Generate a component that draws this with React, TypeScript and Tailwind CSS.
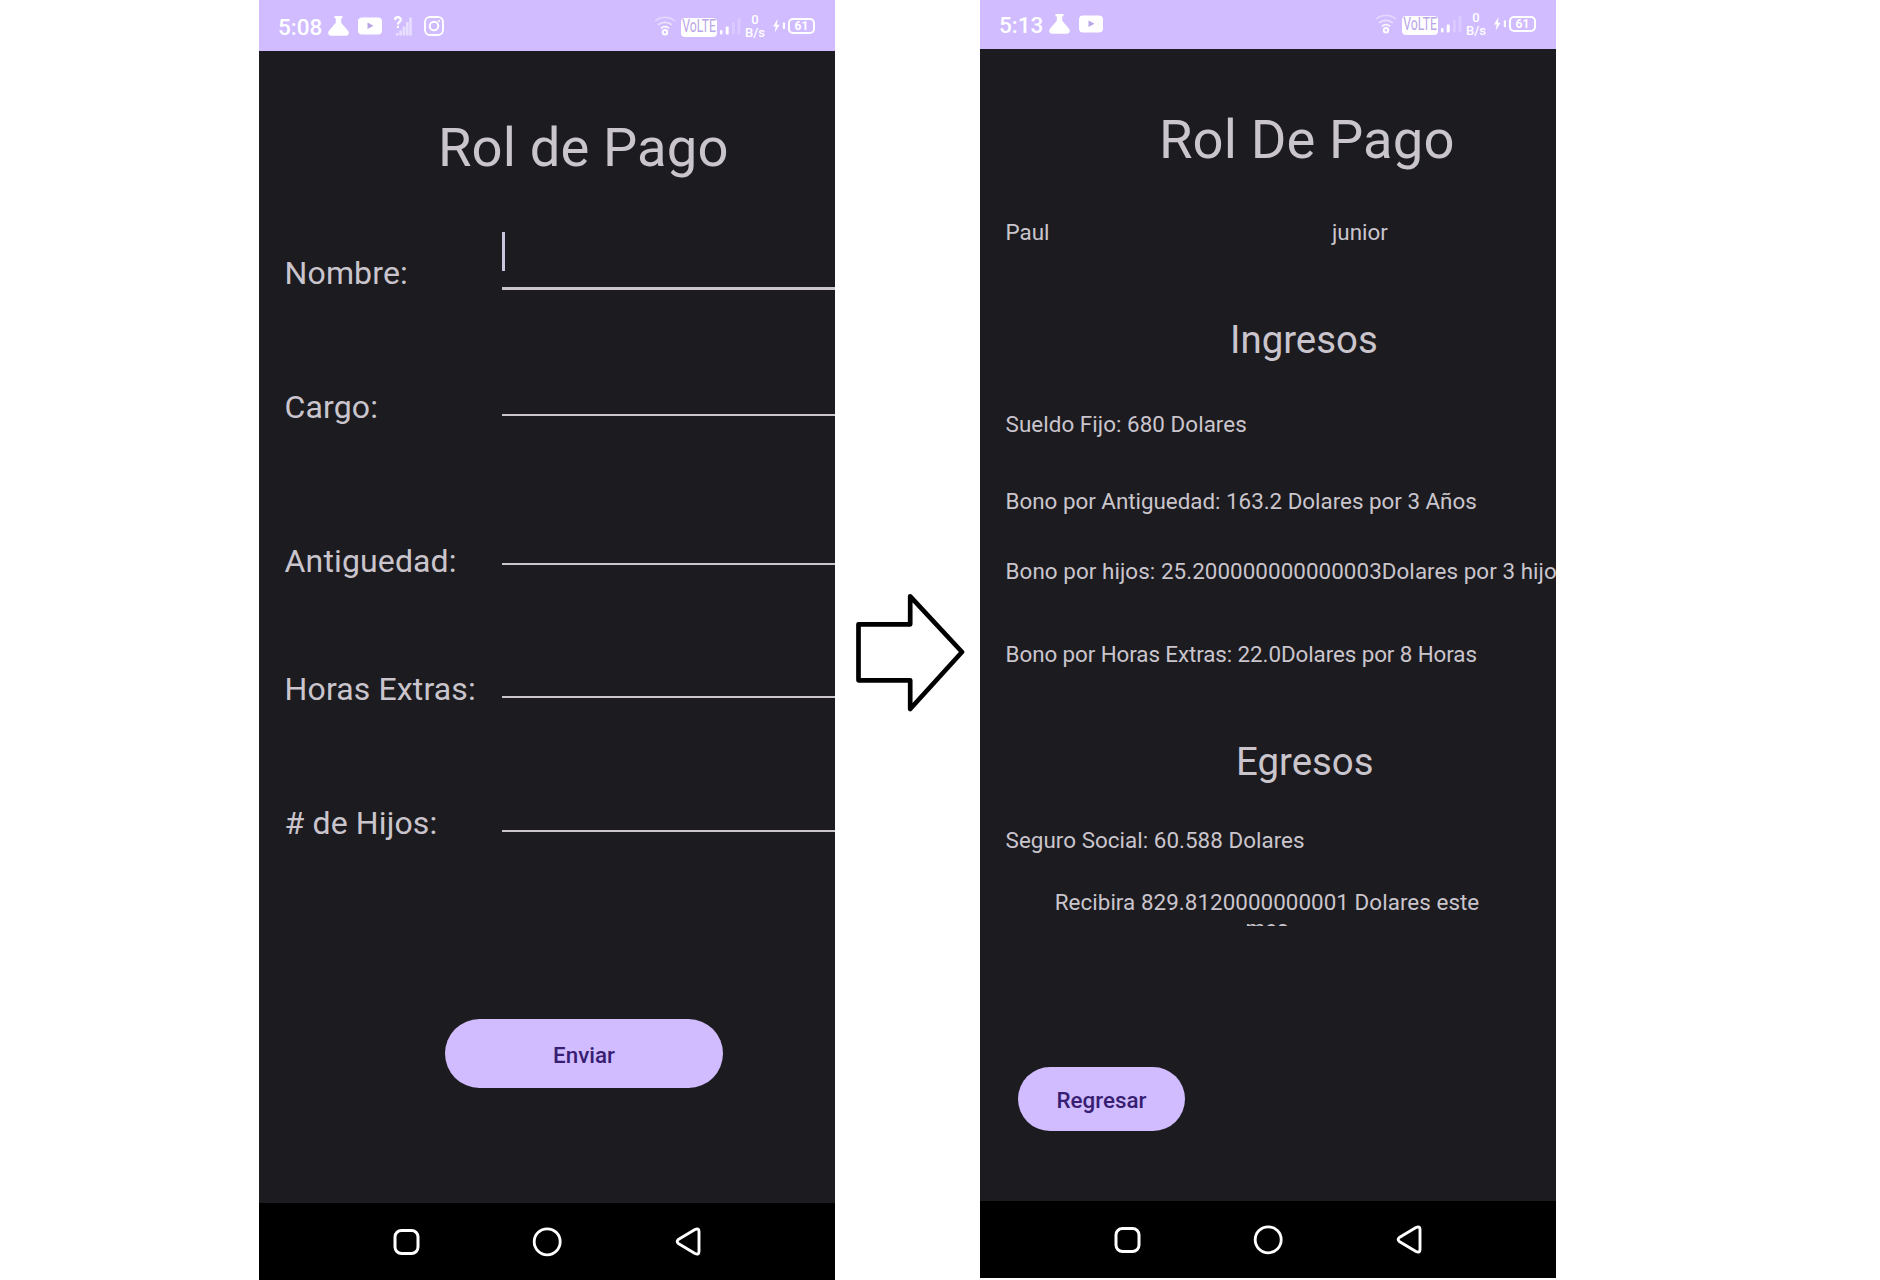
import React from "react";

function FlaskIcon() {
  return (
    <svg className="h-5 w-[21px] shrink-0" viewBox="0 0 21 20" fill="currentColor">
      <path d="M6.500 0h8v2.200h-1.300v4.600l6.600 7.600c2 2.400.9 5.300-2 5.300H3.200c-2.900 0-4-2.900-2-5.300l6.600-7.600V2.200H6.500z" />
    </svg>
  );
}

function VideoIcon() {
  return (
    <svg className="h-[18px] w-6 shrink-0" viewBox="0 0 24 18">
      <rect x="0" y="0.500" width="24" height="17" rx="4" fill="currentColor" />
      <path d="M9.500 5.500v6.500l6-3.250z" fill="#b9a6e6" />
    </svg>
  );
}

function UnknownSignalIcon() {
  return (
    <svg className="h-5 w-[18px] shrink-0" viewBox="0 0 18 20" fill="none" stroke="currentColor">
      <path d="M1 4C1 .3 6.800.3 6.800 3.800c0 2.200-2.900 2.200-2.900 4.700M3.900 9.800v2.200" strokeWidth="2.200" />
      <path d="M3.200 19.500v-2.500M6.600 19.500v-5M10 19.500V10.500M13.300 19.500V6M16.500 19.500V1.500" strokeWidth="2.700" opacity="0.500" />
    </svg>
  );
}

function CameraIcon() {
  return (
    <svg className="h-5 w-5 shrink-0" viewBox="0 0 20 20" fill="none" stroke="currentColor" strokeWidth="1.900">
      <rect x="1" y="1" width="18" height="18" rx="5" />
      <circle cx="10" cy="10" r="4.300" />
      <circle cx="15" cy="5" r="1.100" fill="currentColor" stroke="none" />
    </svg>
  );
}

function WifiIcon() {
  return (
    <svg className="h-5 w-[22px] shrink-0" viewBox="0 0 22 20" fill="none" stroke="currentColor" strokeWidth="1.700">
      <path d="M1 5.200C6.500.2 15.500.2 21 5.200" opacity="0.400" />
      <path d="M4 8.900c4-3.500 10-3.500 14 0" opacity="0.550" />
      <path d="M6.800 12.300c2.500-2 5.900-2 8.400 0" opacity="0.900" />
      <circle cx="11" cy="16.300" r="2.200" strokeWidth="2" />
    </svg>
  );
}

function SignalIcon() {
  return (
    <svg className="h-5 w-[21px] shrink-0" viewBox="0 0 21 20" fill="currentColor">
      <rect x="0" y="14" width="2.500" height="4.500" rx="1" />
      <rect x="5.700" y="10.500" width="3" height="8" rx="1" />
      <rect x="12" y="6" width="2.700" height="12.500" rx="1" opacity="0.220" />
      <rect x="17.500" y="2" width="3" height="16.500" rx="1" opacity="0.220" />
    </svg>
  );
}

function ChargeIcon() {
  return (
    <svg className="h-[14px] w-[13px] shrink-0" viewBox="0 0 13 14" fill="currentColor">
      <path d="M4.600 0 0 7.600h2.700L1.700 13.500 6.600 5.800H3.900z" />
      <rect x="9.800" y="3.300" width="2.200" height="7" rx="1" />
    </svg>
  );
}

function StatusBar({ time, className, children }: { time: string; className: string; children?: React.ReactNode }) {
  return (
    <header className={`flex shrink-0 items-center bg-[#d0bcff] pl-[19px] pr-5 text-white ${className}`}>
      <span className="w-[50px] pt-[2px] text-[22.500px] leading-6 font-medium">{time}</span>
      <FlaskIcon />
      <div className="ml-[9px] flex items-center gap-3">
        <VideoIcon />
        {children}
      </div>
      <div className="ml-auto flex items-center">
        <WifiIcon />
        <div className="mt-[2px] ml-[5px] flex h-[19px] w-9 items-center justify-center rounded-[4px] bg-white text-[#b9a6e6]">
          <span className="scale-x-[0.700] text-[17.500px] leading-none">VoLTE</span>
        </div>
        <div className="ml-[3px]">
          <SignalIcon />
        </div>
        <div className="ml-[4px] flex w-5 flex-col items-center text-[13px] leading-[13px] font-medium">
          <span>0</span>
          <span>B/s</span>
        </div>
        <div className="ml-[8px] flex items-center">
          <ChargeIcon />
          <div className="ml-[2px] flex h-4 w-[27px] items-center justify-center rounded-[5px] border-2 border-white text-[12px] leading-none font-bold">
            61
          </div>
        </div>
      </div>
    </header>
  );
}

function NavBar() {
  return (
    <nav className="flex h-[77px] shrink-0 items-start bg-black pt-6 pl-[134px] text-white">
      <svg className="mt-[2px] h-[26px] w-[27px]" viewBox="0 0 27 26" fill="none" stroke="currentColor" strokeWidth="3">
        <rect x="2" y="1.500" width="23" height="23" rx="6.500" />
      </svg>
      <svg className="ml-[112px] h-[30px] w-[30px]" viewBox="0 0 30 30" fill="none" stroke="currentColor" strokeWidth="2.800">
        <circle cx="15.200" cy="14.800" r="13" />
      </svg>
      <svg className="ml-[113px] h-[30px] w-[27px]" viewBox="0 0 27 30" fill="none" stroke="currentColor" strokeWidth="2.900" strokeLinejoin="round">
        <path d="M3.300 12.600 20 2.500Q24 .8 24 4.500V24.500Q24 28.200 20 26.500L3.300 16.400Q1 14.500 3.300 12.600Z" />
      </svg>
    </nav>
  );
}

function Field({ label, className, inputClass, children }: { label: string; className: string; inputClass: string; children?: React.ReactNode }) {
  return (
    <div className={`flex shrink-0 items-start pl-[25.600px] ${className}`}>
      <span className="w-[217.400px] shrink-0 self-end text-[32px] leading-[38px] tracking-[0.130px] whitespace-nowrap">{label}</span>
      <div className={`flex-1 border-[#cac5cd] ${inputClass}`}>{children}</div>
    </div>
  );
}

function Line({ className, children }: { className: string; children: React.ReactNode }) {
  return <p className={`shrink-0 pl-[25.600px] text-[22.400px] leading-[26px] whitespace-nowrap ${className}`}>{children}</p>;
}

export default function App() {
  return (
    <main className="flex h-[1280px] w-[1880px] items-start overflow-hidden bg-white pl-[259px] font-['Roboto',sans-serif] text-[#cac5cd]">
      <section className="flex h-[1280px] w-[576px] shrink-0 flex-col overflow-hidden bg-[#1c1b1f]">
        <StatusBar time="5:08" className="h-[51px] pt-[1px]">
          <UnknownSignalIcon />
          <CameraIcon />
        </StatusBar>
        <h1 className="mt-[65px] ml-[179px] shrink-0 text-[54.400px] leading-[64px] tracking-[0.100px] whitespace-nowrap">Rol de Pago</h1>
        <Field label="Nombre:" className="mt-[52px] h-[60px]" inputClass="h-[58px] border-b-[3px] border-[#c8c3dc]">
          <div className="h-[39px] w-[3px] bg-[#cac4dc]" />
        </Field>
        <Field label="Cargo:" className="mt-[96px] h-[38px]" inputClass="h-[28px] border-b-2" />
        <Field label="Antiguedad:" className="mt-[116px] h-[38px]" inputClass="h-[23px] border-b-2" />
        <Field label="Horas Extras:" className="mt-[90px] h-[38px]" inputClass="h-[28px] border-b-2" />
        <Field label="# de Hijos:" className="mt-[96px] h-[38px]" inputClass="h-[28px] border-b-2" />
        <button className="mt-[177px] ml-[186px] h-[69px] w-[278px] shrink-0 rounded-full bg-[#d0bcff] pt-[2px] text-[22.400px] leading-[26px] font-medium text-[#381e72]">
          Enviar
        </button>
        <div className="mt-auto">
          <NavBar />
        </div>
      </section>

      <div className="flex w-[145px] shrink-0 justify-center pt-[592px] pl-[6px]">
        <svg className="h-[120px] w-[113px]" viewBox="0 0 113 120" fill="none" stroke="#000" strokeWidth="4.700" strokeLinejoin="round">
          <path d="M4.500 32.300H56.200V4.300L108 60 56.200 117V88.300H4.500Z" />
        </svg>
      </div>

      <section className="flex h-[1278px] w-[576px] shrink-0 flex-col overflow-hidden bg-[#1c1b1f]">
        <StatusBar time="5:13" className="h-[49px] pb-[1px]" />
        <h1 className="mt-[59px] ml-[179px] shrink-0 text-[54.400px] leading-[64px] tracking-[0.100px] whitespace-nowrap">Rol De Pago</h1>
        <div className="mt-[47px] flex shrink-0">
          <Line className="w-[352px]">Paul</Line>
          <p className="text-[22.400px] leading-[26px]">junior</p>
        </div>
        <h2 className="mt-[72px] ml-[250px] shrink-0 text-[38.400px] leading-[46px]">Ingresos</h2>
        <Line className="mt-[48px] tracking-[0.050px]">Sueldo Fijo: 680 Dolares</Line>
        <Line className="mt-[51px] tracking-[-0.020px]">Bono por Antiguedad: 163.2 Dolares por 3 Años</Line>
        <Line className="mt-[44px] tracking-[0.060px]">Bono por hijos: 25.200000000000003Dolares por 3 hijos</Line>
        <Line className="mt-[57px] tracking-[-0.090px]">Bono por Horas Extras: 22.0Dolares por 8 Horas</Line>
        <h2 className="mt-[72px] ml-[256px] shrink-0 text-[38.400px] leading-[46px]">Egresos</h2>
        <Line className="mt-[42px] tracking-[0.040px]">Seguro Social: 60.588 Dolares</Line>
        <p className="mt-[36px] ml-[57px] h-[37px] w-[460px] shrink-0 overflow-hidden text-center text-[22.400px] leading-[26px] tracking-[0.050px]">
          Recibira 829.8120000000001 Dolares este mes
        </p>
        <button className="mt-[141px] ml-[38px] h-[64px] w-[167px] shrink-0 rounded-full bg-[#d0bcff] pt-[2px] text-[22.400px] leading-[26px] font-medium text-[#381e72]">
          Regresar
        </button>
        <div className="mt-auto">
          <NavBar />
        </div>
      </section>
    </main>
  );
}
